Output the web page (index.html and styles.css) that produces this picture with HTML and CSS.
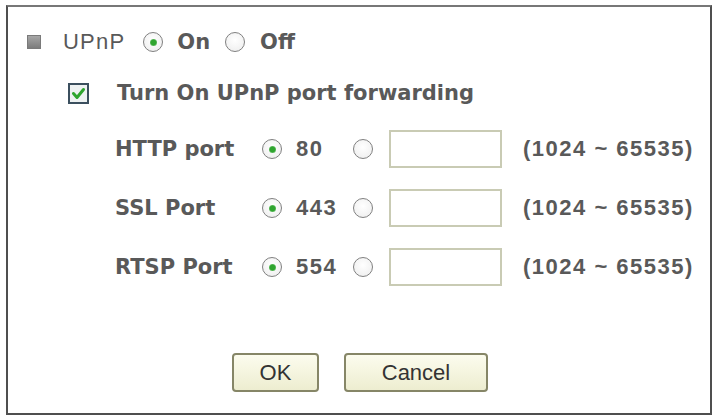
FILE: index.html
```html
<!DOCTYPE html>
<html>
<head>
<meta charset="utf-8">
<title>UPnP</title>
<link rel="stylesheet" href="styles.css">
</head>
<body>
<div class="panel">
  <div class="row upnp-row">
    <span class="bullet"></span>
    <span class="title">UPnP</span>
    <span class="radio on r-on"></span>
    <span class="word opt-on">On</span>
    <span class="radio r-off"></span>
    <span class="word">Off</span>
  </div>
  <div class="row forward-row">
    <svg class="check" viewBox="0 0 21 21" width="21" height="21">
      <rect x="1" y="1" width="19" height="19" fill="#eef2f2" stroke="#3b4f5e" stroke-width="2"/>
      <path d="M5.5 10.5 L9 14.5 L15.5 6.5" fill="none" stroke="#2ea52e" stroke-width="3" stroke-linecap="round" stroke-linejoin="round"/>
    </svg>
    <span class="word">Turn On UPnP port forwarding</span>
  </div>
  <div class="ports">
    <div class="port-row">
      <span class="word port-label">HTTP port</span>
      <span class="radio on"></span>
      <span class="num port-value">80</span>
      <span class="radio"></span>
      <input class="port-input" type="text">
      <span class="num">(1024 ~ 65535)</span>
    </div>
    <div class="port-row">
      <span class="word port-label">SSL Port</span>
      <span class="radio on"></span>
      <span class="num port-value">443</span>
      <span class="radio"></span>
      <input class="port-input" type="text">
      <span class="num">(1024 ~ 65535)</span>
    </div>
    <div class="port-row">
      <span class="word port-label">RTSP Port</span>
      <span class="radio on"></span>
      <span class="num port-value">554</span>
      <span class="radio"></span>
      <input class="port-input" type="text">
      <span class="num">(1024 ~ 65535)</span>
    </div>
  </div>
  <div class="actions">
    <button class="btn btn-ok">OK</button>
    <button class="btn btn-cancel">Cancel</button>
  </div>
</div>
</body>
</html>
```

FILE: styles.css
```css
html, body {
  margin: 0;
  padding: 0;
  background: #ffffff;
}

body {
  font-family: "Liberation Sans", Arial, sans-serif;
  color: #595959;
}

.panel {
  box-sizing: border-box;
  width: 706px;
  height: 410px;
  margin: 5px 0 0 6px;
  border: 2px solid #4f4f4f;
  border-top-color: #777777;
  background: #ffffff;
  padding-top: 23px;
  display: flex;
  flex-direction: column;
}

.row {
  display: flex;
  align-items: center;
  height: 24px;
}

.upnp-row {
  padding-left: 19px;
}

.bullet {
  box-sizing: border-box;
  width: 14px;
  height: 14px;
  border: 1px solid #7a7a7a;
  background: linear-gradient(#a6a6a6, #7c7c7c);
  margin-right: 22px;
}

.title {
  font-size: 22px;
  letter-spacing: 1.2px;
  margin-right: 18px;
}

.word {
  font-family: "DejaVu Sans", Verdana, sans-serif;
  font-size: 21px;
  font-weight: bold;
  white-space: nowrap;
}

.num {
  font-family: "Liberation Sans", Arial, sans-serif;
  font-size: 22px;
  font-weight: bold;
  letter-spacing: 1.5px;
  white-space: nowrap;
}

.r-on {
  margin-right: 14px;
}

.opt-on {
  margin-right: 15px;
}

.r-off {
  margin-right: 15px;
}

.radio {
  box-sizing: border-box;
  width: 20px;
  height: 20px;
  flex: none;
  border-radius: 50%;
  border: 1.5px solid #808080;
  background: radial-gradient(circle at 50% 40%, #ffffff 0, #ececec 100%);
  display: flex;
  align-items: center;
  justify-content: center;
}

.radio.on::after {
  content: "";
  width: 7px;
  height: 7px;
  border-radius: 50%;
  background: radial-gradient(circle, #2fa52f 45%, #9ad39a 100%);
}

.forward-row {
  margin-top: 27px;
  padding-left: 60px;
}

.check {
  flex: none;
  margin-right: 28px;
}

.ports {
  margin-top: 25px;
  display: flex;
  flex-direction: column;
  gap: 21px;
  padding-left: 107px;
}

.port-row {
  display: flex;
  align-items: center;
  height: 38px;
}

.port-label {
  width: 147px;
  flex: none;
}

.port-value {
  width: 57px;
  flex: none;
  margin-left: 14px;
}

.port-input {
  box-sizing: border-box;
  width: 113px;
  height: 38px;
  margin: 0 21px 0 16px;
  border: 2px solid #c9cbb4;
  background: #ffffff;
  padding: 0;
  outline: none;
}

.actions {
  margin-top: 67px;
  display: flex;
  justify-content: center;
  gap: 25px;
  padding-left: 2px;
}

.btn {
  box-sizing: border-box;
  height: 39px;
  border: 2px solid #868667;
  border-radius: 4px;
  background: linear-gradient(#fcfcee, #ededd0);
  font-family: "Liberation Sans", Arial, sans-serif;
  font-size: 22px;
  color: #333333;
  padding: 0;
}

.btn-ok {
  width: 87px;
}

.btn-cancel {
  width: 144px;
}
```
